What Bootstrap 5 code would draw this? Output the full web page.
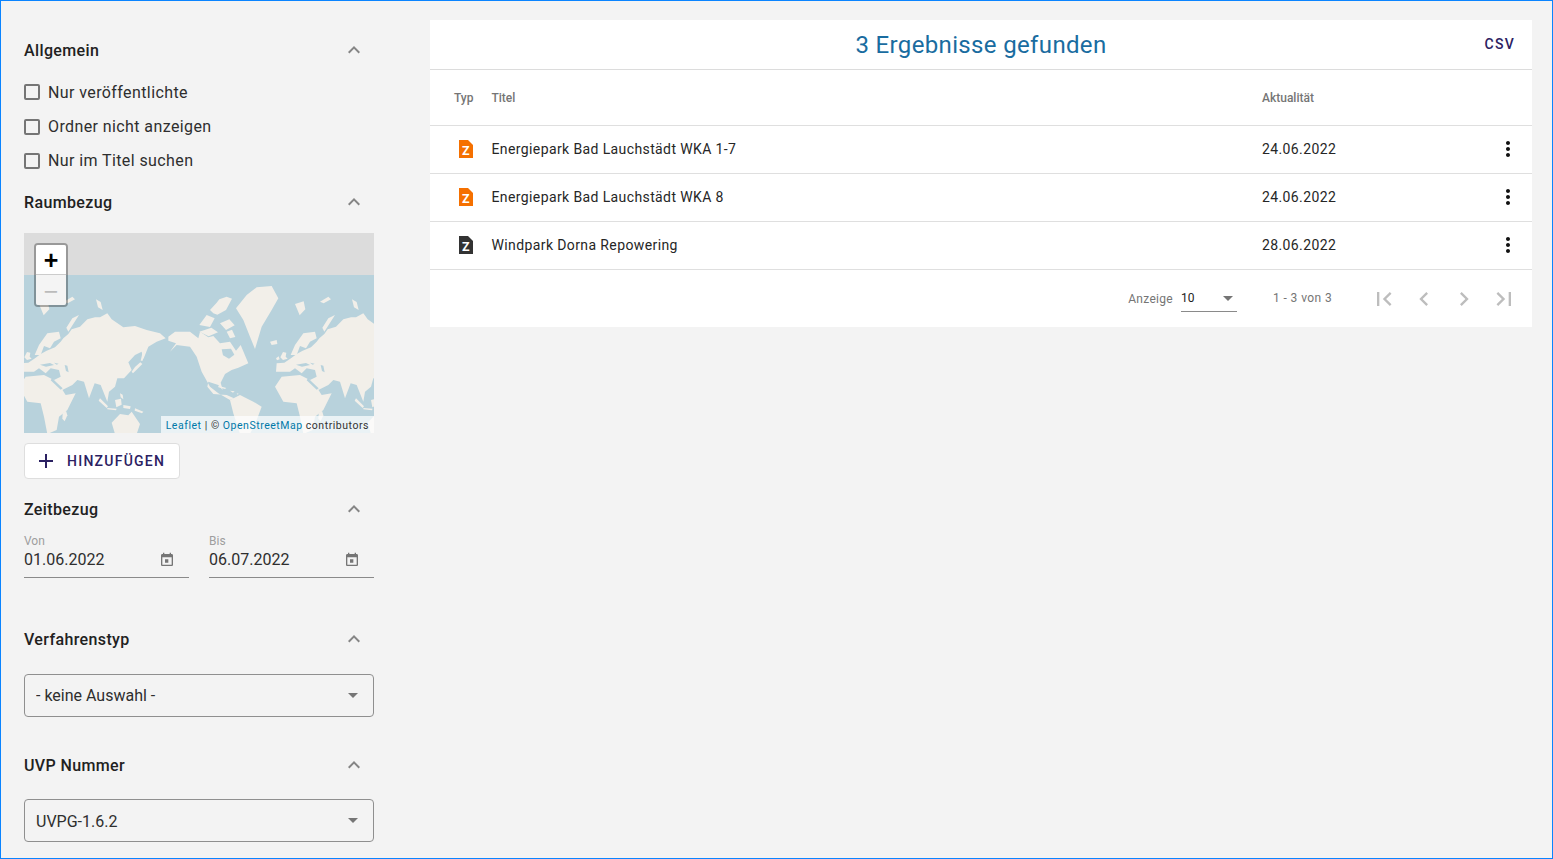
<!DOCTYPE html>
<html lang="de">
<head>
    <meta charset="UTF-8">
    <meta name="viewport" content="width=device-width, initial-scale=1.0">
    <title>UVP Suche</title>
    <link href="https://cdn.jsdelivr.net/npm/bootstrap@5.3.2/dist/css/bootstrap.min.css" rel="stylesheet">
    <script src="https://cdn.jsdelivr.net/npm/bootstrap@5.3.2/dist/js/bootstrap.bundle.min.js"></script>
    <style>
        html, body { height: 100%; overflow: hidden; }
        body {
            background-color: #f3f3f3;
            border: 1px solid #0a84ff;
            font-family: Roboto, "Liberation Sans", sans-serif;
            color: #212121;
        }
        .side-panel { width: 373px; padding: 37px 0 0 23px; flex: none; }
        .filter-head { height: 24px; width: 350px; padding-right: 8px; font-size: 16px; font-weight: 500; letter-spacing: .37px; }
        .filter-head span { padding-top: 2px; }
        .filter-head svg { width: 24px; height: 24px; fill: #858585; }
        .head-map { margin-top: 12px; margin-bottom: 19px; }
        .head-time { margin-top: 18px; margin-bottom: 12px; }
        .head-type { margin-top: 49px; margin-bottom: 23px; }
        .head-number { margin-top: 36px; margin-bottom: 22px; }
        .check-list { margin-top: 13px; }
        .check-row { height: 34px; font-size: 16px; letter-spacing: .4px; color: #2e2e2e; }
        .check-row:first-child label { padding-top: 2px; }
        .check-row.is-second { height: 35px; padding-top: 1px; }
        input.check-box[type=checkbox] {
            width: 16px; height: 16px; margin: 0 8px 0 0;
            background-color: transparent; border: 2px solid #757575; border-radius: 2px;
        }
        .map-box { position: relative; width: 350px; height: 200px; overflow: hidden; background: #dcdcdc; }
        .map-box > svg { display: block; }
        .zoom-ctl {
            position: absolute; left: 10px; top: 10px; width: 34px;
            border: 2px solid rgba(0,0,0,.3); border-radius: 4px;
        }
        .zoom-btn {
            height: 30px; background: #fff; color: #000; font: bold 25px/30px "Liberation Sans", sans-serif;
            text-align: center; border-bottom: 1px solid #ccc; border-radius: 2px 2px 0 0;
        }
        .zoom-btn.is-off { background: #f4f4f4; color: #bbb; font-weight: 400; line-height: 32px; border-bottom: 0; border-radius: 0 0 2px 2px; }
        .map-credit {
            position: absolute; right: 0; bottom: 0; height: 17px; padding: 0 5px;
            background: rgba(255,255,255,.7); color: #333;
            font-size: 10.5px; line-height: 20px; letter-spacing: .53px; white-space: nowrap;
        }
        .map-credit a { color: #0078a8; text-decoration: none; }
        .add-btn {
            width: 156px; height: 36px; margin-top: 10px; padding: 0 0 0 9px;
            background: #fff; border: 1px solid #dedede; border-radius: 4px;
            color: #2b2162; font-size: 14px; font-weight: 500; letter-spacing: 1.25px;
        }
        .add-btn svg { width: 24px; height: 24px; fill: #2b2162; margin-right: 9px; }
        .date-row { width: 350px; }
        .date-field { width: 165px; height: 45px; border-bottom: 1px solid #8a8a8a; position: relative; }
        .date-field label { display: block; font-size: 12px; line-height: 14px; color: #9e9e9e; padding-top: 1px; }
        .date-input {
            padding: 0; height: 24px; border: 0; border-radius: 0; background: transparent;
            font-size: 16px; line-height: 24px; color: #2e2e2e; box-shadow: none;
        }
        .date-field svg { position: absolute; right: 14px; top: 19px; width: 16px; height: 16px; fill: #757575; }
        .filter-select {
            width: 350px; height: 43px; padding: 0 11px; background-color: transparent;
            border: 1px solid #8f8f8f; border-radius: 4px; color: #2e2e2e; font-size: 16px;
            background-image: url("data:image/svg+xml,%3Csvg xmlns='http://www.w3.org/2000/svg' viewBox='0 0 10 5'%3E%3Cpath fill='%23757575' d='M0 0h10L5 5z'/%3E%3C/svg%3E");
            background-size: 10px 5px; background-position: right 15px center;
        }
        .filter-select.is-low { padding-top: 2px; }
        .result-card { width: 1102px; height: 307px; margin: 19px 0 0 56px; background: #fff; }
        .result-head { position: relative; height: 50px; border-bottom: 1px solid #dcdcdc; }
        .result-title { font-size: 24px; font-weight: 400; letter-spacing: .35px; color: #196ca0; margin: 0; line-height: 51px; text-align: center; }
        .csv-link {
            position: absolute; right: 17px; top: 15px; padding: 0; border: 0; background: none;
            color: #2b2162; font-size: 14px; font-weight: 500; letter-spacing: 1.25px; line-height: 18px;
        }
        .result-table { table-layout: fixed; margin: 0; width: 1102px; --bs-table-bg: #fff; }
        .result-table th, .result-table td { border-bottom: 1px solid #dfdfdf; padding: 0; vertical-align: middle; }
        .result-table th { height: 55px; font-size: 12px; font-weight: 500; color: #757575; padding-top: 1px; }
        .result-table td { height: 48px; font-size: 14px; letter-spacing: .39px; color: #262626; }
        .result-table .type-col { width: 61.5px; padding-left: 24px; }
        .result-table .title-col { width: 770.5px; }
        .result-table .more-col { width: 36px; }
        .doc-icon { display: block; margin-left: 5px; width: 14px; height: 18px; }
        .doc-icon text { font: bold 12.5px Roboto, sans-serif; fill: #fff; text-anchor: middle; }
        .more-col svg { display: block; width: 24px; height: 24px; fill: #111; }
        .pager-bar { height: 58px; padding-right: 8px; font-size: 12px; color: #757575; }
        .pager-label { letter-spacing: .3px; }
        .page-size {
            width: 56px; height: 26px; margin: 0 36px 0 8px; padding: 0;
            border: 0; border-bottom: 1px solid #8a8a8a; border-radius: 0; background-color: transparent;
            font-size: 12px; color: #212121;
            background-image: url("data:image/svg+xml,%3Csvg xmlns='http://www.w3.org/2000/svg' viewBox='0 0 10 5'%3E%3Cpath fill='%23757575' d='M0 0h10L5 5z'/%3E%3C/svg%3E");
            background-size: 10px 5px; background-position: right 4px center;
        }
        .range-text { width: 91px; letter-spacing: .4px; position: relative; top: -1px; }
        .page-btn { width: 40px; height: 40px; padding: 6px; border: 0; background: none; }
        .page-btn svg { display: block; width: 28px; height: 28px; fill: #bdbdbd; }
    </style>
</head>
<body class="m-0">
    <div class="d-flex">
        <aside class="side-panel">
            <!-- Allgemein -->
            <div class="filter-head d-flex justify-content-between align-items-center">
                <span>Allgemein</span>
                <svg viewBox="0 0 24 24"><path d="M12 8l-6 6 1.41 1.41L12 10.83l4.59 4.58L18 14z"/></svg>
            </div>
            <div class="check-list">
                <div class="check-row d-flex align-items-center"><input type="checkbox" class="form-check-input check-box" id="c1"><label for="c1">Nur veröffentlichte</label></div>
                <div class="check-row is-second d-flex align-items-center"><input type="checkbox" class="form-check-input check-box" id="c2"><label for="c2">Ordner nicht anzeigen</label></div>
                <div class="check-row d-flex align-items-center"><input type="checkbox" class="form-check-input check-box" id="c3"><label for="c3">Nur im Titel suchen</label></div>
            </div>

            <!-- Raumbezug -->
            <div class="filter-head head-map d-flex justify-content-between align-items-center">
                <span>Raumbezug</span>
                <svg viewBox="0 0 24 24"><path d="M12 8l-6 6 1.41 1.41L12 10.83l4.59 4.58L18 14z"/></svg>
            </div>
            <div class="map-box">
                <svg width="350" height="200" viewBox="72 9 1050 600">
                    <defs>
                        <g id="world" fill="#f2efe9">
                            <!-- Eurasia -->
                            <path d="M60 425L102 425 117 415 137 430 152 415 177 420 182 440 162 450 187 480 217 465 232 450 252 455 267 505 284 460 302 465 322 515 327 485 345 470 352 445 372 445 395 420 385 397 405 375 425 365 430 388 445 350 470 335 497 325 480 310 440 300 405 288 370 292 335 268 322 250 300 262 285 262 262 268 240 290 215 298 205 312 190 325 182 335 165 352 140 362 122 372 105 385 85 398 62 400z"/>
                            <!-- Scandinavia -->
                            <path d="M104 375L117 345 142 310 177 305 182 325 162 335 150 355 132 348 122 375z"/>
                            <path d="M73 382l8-16 10 2-2 12 6 6-14 4zM60 385l8-6 3 9-8 3z"/>
                            <!-- Africa -->
                            <path d="M57 470L77 440 132 435 172 455 197 495 227 490 202 540 177 560 170 600 142 612 132 560 122 520 82 515z"/>
                            <path d="M188 550l10-8 4 14-8 18-7-8z"/>
                            <!-- Australia, Indonesia -->
                            <path d="M335 578L360 552 385 556 395 545 420 582 410 612 345 612z"/>
                            <path d="M345 510l18-4 2 18-16 8zM300 505l24 24-4 5-24-22zM322 534l28 2-2 5-26-3zM370 525l22 4-2 8-20-3zM360 490l8 4 2 14-8-6zM405 535l25 10-4 5-22-8z"/>
                            <!-- Japan, Sakhalin -->
                            <path d="M395 425l10-14 16-14 6 5-18 18-10 10zM422 392l6-26 5 4-5 22z"/>
                            <!-- North America -->
                            <path d="M505 320L525 305 570 305 595 325 600 305 625 322 640 318 660 340 690 335 708 362 722 345 745 400 715 413 695 420 675 432 662 458 668 480 655 465 625 455 622 470 640 492 680 495 702 505 690 510 655 490 630 470 605 425 590 380 570 350 530 345 510 365 528 340 505 332z"/>
                            <!-- Greenland, Iceland -->
                            <path d="M708 235L740 195 770 172 815 168 835 205 815 240 785 290 765 357 750 320 730 270z"/>
                            <path d="M810 335l20-5 2 12-17 3z"/>
                            <!-- South America -->
                            <path d="M690 510L720 495 760 515 785 530 770 570 750 612 720 612 700 550z"/>
                            <!-- Arctic Canada -->
                            <path d="M598 285l22-30 24 10-14 26zM630 240l20-22 8-10 22-8 16 6-18 34-26 14-12-4zM598 305l36-12 20 14-28 12zM660 280l28-12 16 18-26 14zM610 270l12-8 4 8-10 6zM680 305l16-6 10 22-16 4z"/>
                            <!-- Arctic Russia -->
                            <path d="M205 305l32-50-20 10-18 28zM288 208l14 8 6 24-14-8zM117 222l26-8 5 24-17 18zM192 215l25-15 8 8-22 12z"/>
                            <!-- Caribbean -->
                            <path d="M655 467l24 7-4 3-20-5zM690 482l14 2-5 4zM710 490l6 1-3 3z"/>
                        </g>
                        <g id="lakes" fill="#b8d2dc">
                            <path d="M665 358l28-2 10 18-16 12-18-10z"/>
                            <path d="M194 405l8 2 4 20-8-4zM120 404l30-5 12 6-24 5zM162 398l14 3-6 3z"/>
                            <path d="M156 445l32 30-6 4-30-28z"/>
                        </g>
                    </defs>
                    <rect x="72" y="135" width="1050" height="480" fill="#b8d2dc"/>
                    <use href="#world"/><use href="#lakes"/>
                    <use href="#world" x="768"/><use href="#lakes" x="768"/>
                </svg>
                <div class="zoom-ctl">
                    <div class="zoom-btn">+</div>
                    <div class="zoom-btn is-off">&minus;</div>
                </div>
                <div class="map-credit"><a href="#">Leaflet</a> | © <a href="#">OpenStreetMap</a> contributors</div>
            </div>
            <button type="button" class="add-btn d-flex align-items-center">
                <svg viewBox="0 0 24 24"><path d="M19 13h-6v6h-2v-6H5v-2h6V5h2v6h6v2z"/></svg>HINZUFÜGEN
            </button>

            <!-- Zeitbezug -->
            <div class="filter-head head-time d-flex justify-content-between align-items-center">
                <span>Zeitbezug</span>
                <svg viewBox="0 0 24 24"><path d="M12 8l-6 6 1.41 1.41L12 10.83l4.59 4.58L18 14z"/></svg>
            </div>
            <div class="date-row d-flex justify-content-between">
                <div class="date-field">
                    <label>Von</label>
                    <input class="form-control date-input" value="01.06.2022">
                    <svg viewBox="0 0 24 24"><path d="M19 3h-1V1h-2v2H8V1H6v2H5c-1.11 0-1.99.9-1.99 2L3 19c0 1.1.89 2 2 2h14c1.1 0 2-.9 2-2V5c0-1.1-.9-2-2-2zm0 16H5V8h14v11zM9 11h5v5H9z"/></svg>
                </div>
                <div class="date-field">
                    <label>Bis</label>
                    <input class="form-control date-input" value="06.07.2022">
                    <svg viewBox="0 0 24 24"><path d="M19 3h-1V1h-2v2H8V1H6v2H5c-1.11 0-1.99.9-1.99 2L3 19c0 1.1.89 2 2 2h14c1.1 0 2-.9 2-2V5c0-1.1-.9-2-2-2zm0 16H5V8h14v11zM9 11h5v5H9z"/></svg>
                </div>
            </div>

            <!-- Verfahrenstyp -->
            <div class="filter-head head-type d-flex justify-content-between align-items-center">
                <span>Verfahrenstyp</span>
                <svg viewBox="0 0 24 24"><path d="M12 8l-6 6 1.41 1.41L12 10.83l4.59 4.58L18 14z"/></svg>
            </div>
            <select class="form-select filter-select"><option>- keine Auswahl -</option></select>

            <!-- UVP Nummer -->
            <div class="filter-head head-number d-flex justify-content-between align-items-center">
                <span>UVP Nummer</span>
                <svg viewBox="0 0 24 24"><path d="M12 8l-6 6 1.41 1.41L12 10.83l4.59 4.58L18 14z"/></svg>
            </div>
            <select class="form-select filter-select is-low"><option>UVPG-1.6.2</option></select>
        </aside>

        <main class="result-card">
            <div class="result-head">
                <h1 class="result-title">3 Ergebnisse gefunden</h1>
                <button type="button" class="csv-link">CSV</button>
            </div>
            <table class="table result-table">
                <thead>
                    <tr>
                        <th class="type-col">Typ</th>
                        <th class="title-col">Titel</th>
                        <th>Aktualität</th>
                        <th class="more-col"></th>
                    </tr>
                </thead>
                <tbody>
                    <tr>
                        <td class="type-col"><svg class="doc-icon" viewBox="0 0 14 18"><path fill="#f57000" d="M0 0h9l5 5v13H0z"/><text x="7" y="15">Z</text></svg></td>
                        <td>Energiepark Bad Lauchstädt WKA 1-7</td>
                        <td>24.06.2022</td>
                        <td class="more-col"><svg viewBox="0 0 24 24"><path d="M12 8c1.1 0 2-.9 2-2s-.9-2-2-2-2 .9-2 2 .9 2 2 2zm0 2c-1.1 0-2 .9-2 2s.9 2 2 2 2-.9 2-2-.9-2-2-2zm0 6c-1.1 0-2 .9-2 2s.9 2 2 2 2-.9 2-2-.9-2-2-2z"/></svg></td>
                    </tr>
                    <tr>
                        <td class="type-col"><svg class="doc-icon" viewBox="0 0 14 18"><path fill="#f57000" d="M0 0h9l5 5v13H0z"/><text x="7" y="15">Z</text></svg></td>
                        <td>Energiepark Bad Lauchstädt WKA 8</td>
                        <td>24.06.2022</td>
                        <td class="more-col"><svg viewBox="0 0 24 24"><path d="M12 8c1.1 0 2-.9 2-2s-.9-2-2-2-2 .9-2 2 .9 2 2 2zm0 2c-1.1 0-2 .9-2 2s.9 2 2 2 2-.9 2-2-.9-2-2-2zm0 6c-1.1 0-2 .9-2 2s.9 2 2 2 2-.9 2-2-.9-2-2-2z"/></svg></td>
                    </tr>
                    <tr>
                        <td class="type-col"><svg class="doc-icon" viewBox="0 0 14 18"><path fill="#333" d="M0 0h9l5 5v13H0z"/><text x="7" y="15">Z</text></svg></td>
                        <td>Windpark Dorna Repowering</td>
                        <td>28.06.2022</td>
                        <td class="more-col"><svg viewBox="0 0 24 24"><path d="M12 8c1.1 0 2-.9 2-2s-.9-2-2-2-2 .9-2 2 .9 2 2 2zm0 2c-1.1 0-2 .9-2 2s.9 2 2 2 2-.9 2-2-.9-2-2-2zm0 6c-1.1 0-2 .9-2 2s.9 2 2 2 2-.9 2-2-.9-2-2-2z"/></svg></td>
                    </tr>
                </tbody>
            </table>
            <div class="pager-bar d-flex justify-content-end align-items-center">
                <span class="pager-label">Anzeige</span>
                <select class="form-select page-size"><option>10</option></select>
                <span class="range-text">1 - 3 von 3</span>
                <button type="button" class="page-btn"><svg viewBox="0 0 24 24"><path d="M18.41 16.59L13.82 12l4.59-4.59L17 6l-6 6 6 6zM6 6h2v12H6z"/></svg></button>
                <button type="button" class="page-btn"><svg viewBox="0 0 24 24"><path d="M15.41 7.41L14 6l-6 6 6 6 1.41-1.41L10.83 12z"/></svg></button>
                <button type="button" class="page-btn"><svg viewBox="0 0 24 24"><path d="M10 6L8.59 7.41 13.17 12l-4.58 4.59L10 18l6-6z"/></svg></button>
                <button type="button" class="page-btn"><svg viewBox="0 0 24 24"><path d="M5.59 7.41L10.18 12l-4.59 4.59L7 18l6-6-6-6zM16 6h2v12h-2z"/></svg></button>
            </div>
        </main>
    </div>
</body>
</html>
